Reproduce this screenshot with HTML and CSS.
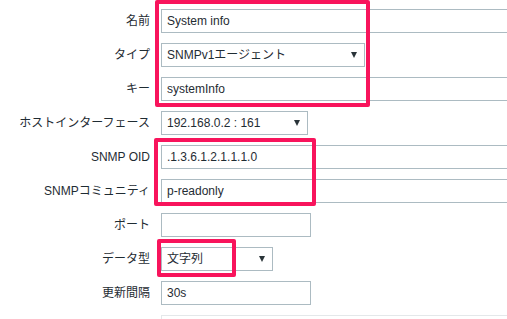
FILE: index.html
```html
<!DOCTYPE html>
<html lang="ja">
<head>
<meta charset="utf-8">
<link rel="stylesheet" href="styles.css">
</head>
<body>
<div class="page">
  <form class="form">
    <div class="row"><label class="lbl">名前</label><div class="field"><div class="input w-full">System info</div></div></div>
    <div class="row"><label class="lbl">タイプ</label><div class="field"><div class="select w-type"><span>SNMPv1エージェント</span><span class="arrow"></span></div></div></div>
    <div class="row"><label class="lbl">キー</label><div class="field"><div class="input w-full">systemInfo</div></div></div>
    <div class="row"><label class="lbl">ホストインターフェース</label><div class="field"><div class="select w-host"><span>192.168.0.2 : 161</span><span class="arrow"></span></div></div></div>
    <div class="row"><label class="lbl">SNMP OID</label><div class="field"><div class="input w-full">.1.3.6.1.2.1.1.1.0</div></div></div>
    <div class="row"><label class="lbl">SNMPコミュニティ</label><div class="field"><div class="input w-full">p-readonly</div></div></div>
    <div class="row"><label class="lbl">ポート</label><div class="field"><div class="input w-small"></div></div></div>
    <div class="row"><label class="lbl">データ型</label><div class="field"><div class="select w-dtype"><span>文字列</span><span class="arrow"></span></div></div></div>
    <div class="row"><label class="lbl">更新間隔</label><div class="field"><div class="input w-small">30s</div></div></div>
    <div class="row"><label class="lbl"></label><div class="field"><div class="input w-full faint"></div></div></div>
  </form>
  <div class="mark mark-1"></div>
  <div class="mark mark-2"></div>
  <div class="mark mark-3"></div>
</div>
</body>
</html>
```

FILE: styles.css
```css
html, body {
  margin: 0;
  padding: 0;
  background: #ffffff;
  overflow: hidden;
}
body {
  font-family: "Liberation Sans", Arial, "Noto Sans CJK JP", sans-serif;
  font-size: 12px;
  color: #1f2c33;
}
.page {
  position: relative;
  width: 507px;
  height: 319px;
  overflow: hidden;
}
.form {
  display: flex;
  flex-direction: column;
  gap: 10px;
  padding-top: 9px;
}
.row {
  display: grid;
  grid-template-columns: 150px 1fr;
  column-gap: 11px;
  align-items: center;
  height: 24px;
}
.lbl {
  text-align: right;
  white-space: nowrap;
  line-height: 24px;
  font-family: "Liberation Sans", Arial, "Noto Sans CJK JP", sans-serif;
}
.field {
  display: flex;
  min-width: 0;
}
.input, .select {
  box-sizing: border-box;
  height: 24px;
  border: 1px solid #acbbc2;
  background: #ffffff;
  padding: 0 5px;
  line-height: 22px;
  white-space: nowrap;
  flex: none;
}
.select {
  display: flex;
  align-items: center;
  justify-content: space-between;
  padding-right: 7px;
}
.arrow {
  width: 0;
  height: 0;
  border-left: 3.5px solid transparent;
  border-right: 3.5px solid transparent;
  border-top: 6px solid #2a3439;
}
.w-full { width: 453px; }
.w-type { width: 204px; }
.w-host { width: 147px; }
.w-small { width: 150px; }
.w-dtype { width: 112px; }
.faint { border-color: #e4e8ea; }

.mark {
  position: absolute;
  box-sizing: border-box;
  border: 4.5px solid #f8145c;
  border-radius: 2px;
}
.mark-1 { left: 155px; top: 0; width: 215px; height: 107px; }
.mark-2 { left: 154px; top: 138px; width: 162px; height: 68px; }
.mark-3 { left: 157px; top: 239px; width: 79px; height: 38px; }
```
